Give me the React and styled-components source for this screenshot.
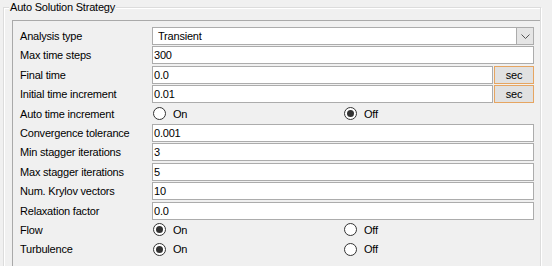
import React from "react";
import styled, { createGlobalStyle } from "styled-components";

const Global = createGlobalStyle`
  html, body { margin: 0; padding: 0; background: #f0f0f0; }
  body { font-family: "Liberation Sans", Arial, sans-serif; font-size: 11px; letter-spacing: -0.2px; color: #000; overflow: hidden; }
  * { box-sizing: border-box; }
`;

const Page = styled.div`
  width: 552px;
  height: 266px;
  padding: 7px 0 0 3px;
  overflow: hidden;
`;

const Group = styled.div`
  position: relative;
  width: 538px;
  height: 280px;
  border: 1px solid #dcdcdc;
  box-shadow: inset 1px 1px 0 #fff, 1px 1px 0 #fff;
  padding: 12px 0 0 8px;
  display: flex;
`;

const Title = styled.span`
  position: absolute;
  top: -8px;
  left: 5px;
  padding: 0 1px;
  background: #f0f0f0;
  line-height: 14px;
  color: #000;
`;

const Panel = styled.div`
  flex: 1;
  border-left: 1px solid #a9a9a9;
  border-top: 1px solid #a9a9a9;
  padding: 6px 0 0 7px;
`;

const Form = styled.div`
  display: grid;
  grid-template-columns: 132px 382px;
  grid-auto-rows: 19.4px;
  align-items: start;
`;

const Label = styled.div`
  height: 18px;
  line-height: 18px;
  white-space: nowrap;
`;

const Field = styled.div`
  display: flex;
  gap: 1px;
  height: 18px;
`;

const TextBox = styled.div`
  flex: 1;
  height: 18px;
  border: 1px solid #acacac;
  background: #fff;
  padding-left: ${(p) => p.$pad || 1}px;
  line-height: 16px;
  display: flex;
  align-items: center;
  justify-content: space-between;
`;

const DropButton = styled.div`
  width: 17px;
  height: 16px;
  background: #e5e5e5;
  border-left: 1px solid #acacac;
  display: flex;
  align-items: center;
  justify-content: center;
`;

const SecButton = styled.div`
  width: 40px;
  height: 18px;
  border: 1px solid #e6a561;
  background: #e1e1e1;
  line-height: 16px;
  text-align: center;
`;

const RadioRow = styled.div`
  display: grid;
  grid-template-columns: 191px 191px;
  height: 18px;
  align-items: center;
`;

const RadioOpt = styled.div`
  display: flex;
  align-items: center;
  gap: 7px;
  padding-left: 1px;
`;

const Circle = styled.span`
  width: 13px;
  height: 13px;
  border-radius: 50%;
  border: 1px solid #333;
  background: #fff;
  display: flex;
  align-items: center;
  justify-content: center;
  &::after {
    content: "";
    width: 7px;
    height: 7px;
    border-radius: 50%;
    background: ${(p) => (p.$on ? "#333" : "transparent")};
  }
`;

const Chevron = () => (
  <svg width="9" height="5" viewBox="0 0 9 5">
    <path d="M0.5 0.5 L4.5 4.5 L8.5 0.5" fill="none" stroke="#555" strokeWidth="1" />
  </svg>
);

const Radio = ({ value }) => (
  <RadioRow>
    <RadioOpt>
      <Circle $on={value} />
      <span>On</span>
    </RadioOpt>
    <RadioOpt>
      <Circle $on={!value} />
      <span>Off</span>
    </RadioOpt>
  </RadioRow>
);

const rows = [
  { label: "Analysis type", type: "combo", value: "Transient" },
  { label: "Max time steps", type: "text", value: "300" },
  { label: "Final time", type: "sec", value: "0.0" },
  { label: "Initial time increment", type: "sec", value: "0.01" },
  { label: "Auto time increment", type: "radio", value: false },
  { label: "Convergence tolerance", type: "text", value: "0.001" },
  { label: "Min stagger iterations", type: "text", value: "3" },
  { label: "Max stagger iterations", type: "text", value: "5" },
  { label: "Num. Krylov vectors", type: "text", value: "10" },
  { label: "Relaxation factor", type: "text", value: "0.0" },
  { label: "Flow", type: "radio", value: true },
  { label: "Turbulence", type: "radio", value: true },
];

function renderField(r) {
  if (r.type === "combo")
    return (
      <Field>
        <TextBox $pad={5}>
          <span>{r.value}</span>
          <DropButton>
            <Chevron />
          </DropButton>
        </TextBox>
      </Field>
    );
  if (r.type === "sec")
    return (
      <Field>
        <TextBox>{r.value}</TextBox>
        <SecButton>sec</SecButton>
      </Field>
    );
  if (r.type === "radio") return <Radio value={r.value} />;
  return (
    <Field>
      <TextBox>{r.value}</TextBox>
    </Field>
  );
}

export default function App() {
  return (
    <Page>
      <Global />
      <Group>
        <Title>Auto Solution Strategy</Title>
        <Panel>
          <Form>
            {rows.map((r) => (
              <React.Fragment key={r.label}>
                <Label>{r.label}</Label>
                {renderField(r)}
              </React.Fragment>
            ))}
          </Form>
        </Panel>
      </Group>
    </Page>
  );
}
